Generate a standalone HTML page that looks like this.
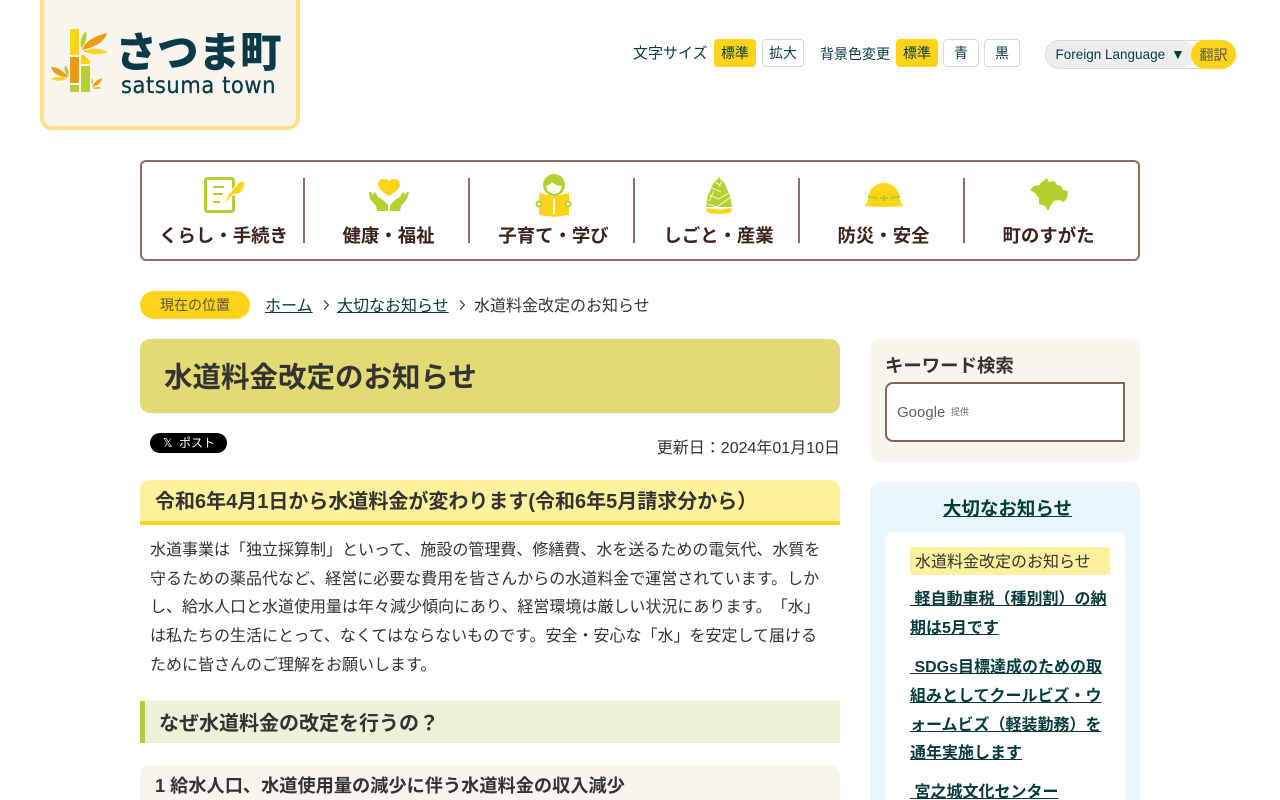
<!DOCTYPE html>
<html lang="ja"><head><meta charset="utf-8"><title>水道料金改定のお知らせ</title>
<style>
html,body{margin:0;padding:0;background:#fff;width:1280px;height:800px;overflow:hidden}
body{font-family:"Liberation Sans","Noto Sans CJK JP",sans-serif;color:#333;position:relative;text-spacing-trim:space-all;font-feature-settings:"chws" 0}
.a{position:absolute;white-space:nowrap}
a{color:#063a3c;text-decoration:underline}
.btn{position:absolute;top:39px;height:26px;line-height:27px;border:1px solid #ddd8cc;border-radius:4px;text-align:center;font-size:14px;color:#063b45;background:#fff}
.btn.on{background:#ffd318;border-color:#ffd318}
.nav{position:absolute;left:140px;top:160px;width:996px;height:97px;border:2px solid #956a60;border-radius:6px}
.sep{position:absolute;top:178px;width:2px;height:65px;background:#956a60}
.nl{position:absolute;top:223px;width:165px;text-align:center;font-size:18.4px;font-weight:bold;color:#3c241c;white-space:nowrap;line-height:26px}
svg{position:absolute;overflow:visible}
.p{left:150px;font-size:16px;line-height:29px}
.side{font-size:16px;line-height:29px}
</style></head><body>

<div class="a" style="left:40px;top:-10px;width:252px;height:132px;background:#f8f4ee;border:4px solid #ffe083;border-radius:12px"></div>
<svg style="left:45px;top:25px" width="70" height="72" viewBox="0 0 70 72">
<rect x="25" y="4" width="9" height="26" fill="#ffd318"/><rect x="25" y="32" width="9" height="26" fill="#ef9a17"/><rect x="25" y="60" width="9" height="7" fill="#b5d02e"/>
<path d="M36 30h3l6 6v3h-9z" fill="#ffd318"/><rect x="36" y="41" width="9" height="26" fill="#b5d02e"/>
<path d="M36 23q-2-10 5-17 2 11-5 17z" fill="#b5d02e"/><path d="M37 25q4-12 25-17-3 12-25 17z" fill="#ef9a17"/><path d="M38 26q12-5 25 1-13 5-25-1z" fill="#ffd318"/>
<path d="M23 52q-5-6-3-12 5 5 3 12z" fill="#b5d02e"/><path d="M23 52q-8-10-17-10 3 10 17 10z" fill="#ef9a17"/><path d="M23 53q-9-3-17 1 9 4 17-1z" fill="#ffd318"/>
<path d="M47 60q-1-4 0-7 2 3 0 7z" fill="#b5d02e"/><path d="M47 62q3-7 10-9-1 7-10 9z" fill="#ef9a17"/><path d="M47 63q5-2 10 0-5 2-10 0z" fill="#b5d02e"/>
</svg>
<div class="a" style="left:115.500px;top:25px;font-size:41.5px;line-height:48px;font-weight:900;color:#0a3a48;font-family:'Noto Sans CJK JP',sans-serif">さつま町</div>
<div class="a" style="left:121px;top:72px;font-size:23px;line-height:28px;color:#0a3a48;letter-spacing:.6px;font-family:'DejaVu Sans',sans-serif;transform-origin:0 0;transform:scaleX(.917);-webkit-text-stroke:.3px #0a3a48">satsuma town</div>

<div class="a" style="left:633px;top:44px;font-size:15px;line-height:20px;color:#063b45">文字サイズ</div>
<div class="btn on" style="left:714px;width:40px">標準</div>
<div class="btn" style="left:762px;width:40px">拡大</div>
<div class="a" style="left:820px;top:44px;font-size:14px;line-height:20px;color:#063b45">背景色変更</div>
<div class="btn on" style="left:896px;width:40px">標準</div>
<div class="btn" style="left:943px;width:34px">青</div>
<div class="btn" style="left:984px;width:34px">黒</div>
<div class="a" style="left:1045px;top:40px;width:189px;height:27px;border:1px solid #ddd8cc;border-radius:15px;background:#fff"></div>
<div class="a" style="left:1046px;top:41px;width:150px;height:27px;border-radius:14px;background:#eee;font-size:13.5px;line-height:27px;color:#063b45;text-indent:9.500px">Foreign Language</div>
<div class="a" style="left:1171px;top:41px;font-size:14px;line-height:27px;color:#063b45">▼</div>
<div class="a" style="left:1191px;top:40px;width:45px;height:29px;border-radius:15px;background:#ffd318;font-size:14px;line-height:31px;text-align:center;color:#555">翻訳</div>

<div class="nav"></div>
<div class="sep" style="left:303px"></div><div class="sep" style="left:468px"></div><div class="sep" style="left:633px"></div><div class="sep" style="left:798px"></div><div class="sep" style="left:963px"></div>

<svg style="left:204px;top:177px" width="42" height="36" viewBox="0 0 42 36">
<rect x="1.500" y="1.500" width="28" height="33" rx="2" fill="none" stroke="#b5d02e" stroke-width="3"/>
<path d="M9 10h11M9 17h10M9 25h7" stroke="#b5d02e" stroke-width="2" fill="none"/>
<path d="M21 26q3-8 7-12 4-5 8-9 3-1 4 1 0 6-4 10-4 1-7 1-4 4-8 9z" fill="#fff" stroke="#fff" stroke-width="2"/>
<path d="M21 26q3-8 7-12 4-5 8-9 3-1 4 1 0 6-4 10-4 1-7 1-4 4-8 9z" fill="#ffd318"/>
</svg>
<svg style="left:368px;top:178px" width="42" height="36" viewBox="0 0 42 36">
<path d="M21 18C14 14 10 10 10 6 10 1 17-1 21 3 25-1 32 1 32 6 32 10 28 14 21 18z" fill="#ffd318"/>
<path d="M1 14l2 0 2 3 1-3 2 1 2 4 5 3 5 5v6H9l-1-5-6-7zM41 14l-2 0-2 3-1-3-2 1-2 4-5 3-5 5v6h10l1-5 6-7z" fill="#b5d02e"/>
</svg>
<svg style="left:534px;top:173px" width="40" height="46" viewBox="0 0 40 46">
<circle cx="20" cy="12" r="11" fill="#b5d02e"/><path d="M12 13q4-1 6-4 4 4 10 4-1 7-8 8-7-1-8-8z" fill="#fff"/>
<path d="M17 17q3 2 6 0-3 3-6 0z" fill="#b5d02e"/>
<path d="M5 20l14 3h2l14-3v22l-15 2-15-2z" fill="#ffd318"/><rect x="19" y="25" width="2" height="16" fill="#fff"/>
<circle cx="5" cy="31" r="2.500" fill="#fff" stroke="#b5d02e" stroke-width="2"/><circle cx="34" cy="31" r="2.500" fill="#fff" stroke="#b5d02e" stroke-width="2"/>
</svg>
<svg style="left:706px;top:175px" width="26" height="40" viewBox="0 0 26 40">
<path d="M13 1l1 3 3 2 2 3 2 5 3 6 2 12H0L2 20l3-6 2-5 2-3 3-2z" fill="#b5d02e"/>
<path d="M9 7l6 4M6 13l9 4M4 20l8 4 11-6M1 29l10 3 14-10M8 16l-5 10M16 6l-3 5" stroke="#fff" stroke-width=".8" fill="none"/>
<path d="M0 33q13 3 26 0l-1 4q-5 2-12 2T1 37z" fill="#ffd318"/>
</svg>
<svg style="left:865px;top:182px" width="38" height="26" viewBox="0 0 38 26">
<path d="M3 18C3 7 11 1 19 1s16 6 16 17l3 6q-19 2-38 0z" fill="#ffd318"/>
<path d="M3 14.500q5 1 10 1.500M25 16q5-.5 10-1.500M15 16h8M19 13v6" stroke="#b5d02e" stroke-width="2" fill="none"/>
</svg>
<svg style="left:1030px;top:178px" width="39" height="34" viewBox="0 0 39 34">
<path d="M0 12 4 8 9 7 12 4 17 0 19 4 24 3 27 7 31 8 33 12 38 13 37 20 34 24 29 22 24 23 21 27 18 33 15 28 9 26 9 20 6 17 5 15z" fill="#b5d02e"/>
</svg>

<div class="nl" style="left:141px">くらし・手続き</div>
<div class="nl" style="left:306px">健康・福祉</div>
<div class="nl" style="left:471px">子育て・学び</div>
<div class="nl" style="left:636px">しごと・産業</div>
<div class="nl" style="left:801px">防災・安全</div>
<div class="nl" style="left:966px">町のすがた</div>

<div class="a" style="left:140px;top:291px;width:110px;height:28px;border-radius:14px;background:#ffd318;text-align:center;font-size:14px;line-height:29px;color:#554">現在の位置</div>
<div class="a" style="left:265px;top:296px;font-size:16px;line-height:22px"><a>ホーム</a></div>
<div class="a" style="left:337px;top:296px;font-size:16px;line-height:22px"><a>大切なお知らせ</a></div>
<div class="a" style="left:474px;top:296px;font-size:16px;line-height:22px;color:#333">水道料金改定のお知らせ</div>
<svg style="left:323px;top:300px" width="7" height="10"><path d="M1 .5l4.500 4.500-4.500 4.500" fill="none" stroke="#333" stroke-width="1.100"/></svg>
<svg style="left:459px;top:300px" width="7" height="10"><path d="M1 .5l4.500 4.500-4.500 4.500" fill="none" stroke="#333" stroke-width="1.100"/></svg>

<div class="a" style="left:140px;top:339px;width:700px;height:74px;border-radius:10px;background:#e4da74"></div>
<div class="a" style="left:164px;top:358px;font-size:28.5px;line-height:40px;font-weight:bold;color:#333">水道料金改定のお知らせ</div>

<div class="a" style="left:150px;top:433px;width:77px;height:20px;border-radius:10px;background:#000;color:#fff;font-size:12px;line-height:20px"><span style="position:absolute;left:13px;top:0">𝕏</span><span style="position:absolute;left:29px;top:0">ポスト</span></div>
<div class="a" style="right:440px;top:438px;font-size:16px;line-height:22px;color:#333">更新日：2024年01月10日</div>

<div class="a" style="left:140px;top:480px;width:700px;height:41px;background:#fdf19d;border-bottom:4px solid #ffd318;border-radius:10px 10px 0 0"></div>
<div class="a" style="left:155px;top:488px;font-size:20px;line-height:28px;font-weight:bold;color:#333">令和6年4月1日から水道料金が変わります(令和6年5月請求分から）</div>

<div class="a p" style="top:536px">水道事業は「独立採算制」といって、施設の管理費、修繕費、水を送るための電気代、水質を</div>
<div class="a p" style="top:565px">守るための薬品代など、経営に必要な費用を皆さんからの水道料金で運営されています。しか</div>
<div class="a p" style="top:593px">し、給水人口と水道使用量は年々減少傾向にあり、経営環境は厳しい状況にあります。「水」</div>
<div class="a p" style="top:622px">は私たちの生活にとって、なくてはならないものです。安全・安心な「水」を安定して届ける</div>
<div class="a p" style="top:651px">ために皆さんのご理解をお願いします。</div>

<div class="a" style="left:140px;top:701px;width:695px;height:42px;background:#ecf1d7;border-left:5px solid #b5d02e"></div>
<div class="a" style="left:159px;top:710px;font-size:20px;line-height:28px;font-weight:bold;color:#333">なぜ水道料金の改定を行うの？</div>

<div class="a" style="left:140px;top:765px;width:700px;height:50px;background:#f8f4ee;border-radius:10px"></div>
<div class="a" style="left:155px;top:773px;font-size:18.2px;line-height:26px;font-weight:bold;color:#333">1 給水人口、水道使用量の減少に伴う水道料金の収入減少</div>

<div class="a" style="left:870px;top:339px;width:270px;height:123px;border-radius:10px;background:#f8f4ee"></div>
<div class="a" style="left:885px;top:353px;font-size:18.4px;line-height:26px;font-weight:bold;color:#333">キーワード検索</div>
<div class="a" style="left:885px;top:382px;width:236px;height:56px;border:2px solid #8b6457;border-radius:8px 0 0 8px;background:#fff"></div>
<div class="a" style="left:897px;top:403px;font-size:15px;line-height:20px;color:#5f6368">Google</div>
<div class="a" style="left:951px;top:405px;font-size:9px;line-height:14px;color:#5f6368">提供</div>

<div class="a" style="left:870px;top:482px;width:270px;height:340px;border-radius:10px;background:#e9f7fd"></div>
<div class="a" style="left:870px;top:496px;width:275px;text-align:center;font-size:18.5px;line-height:26px;font-weight:bold"><a>大切なお知らせ</a></div>
<div class="a" style="left:885px;top:532px;width:240px;height:300px;border-radius:8px;background:#fff"></div>
<div class="a" style="left:910px;top:547px;width:200px;height:28px;border-radius:3px;background:#fdf19d"></div>
<div class="a side" style="left:915px;top:548px;color:#333">水道料金改定のお知らせ</div>
<div class="a side" style="left:910px;top:585px;font-weight:bold"><a>&nbsp;軽自動車税（種別割）の納</a></div>
<div class="a side" style="left:910px;top:614px;font-weight:bold"><a>期は5月です</a></div>
<div class="a side" style="left:910px;top:653px;font-weight:bold"><a>&nbsp;SDGs目標達成のための取</a></div>
<div class="a side" style="left:910px;top:682px;font-weight:bold"><a>組みとしてクールビズ・ウ</a></div>
<div class="a side" style="left:910px;top:711px;font-weight:bold"><a>ォームビズ（軽装勤務）を</a></div>
<div class="a side" style="left:910px;top:739px;font-weight:bold"><a>通年実施します</a></div>
<div class="a side" style="left:910px;top:778px;font-weight:bold"><a>&nbsp;宮之城文化センター</a></div>
</body></html>
